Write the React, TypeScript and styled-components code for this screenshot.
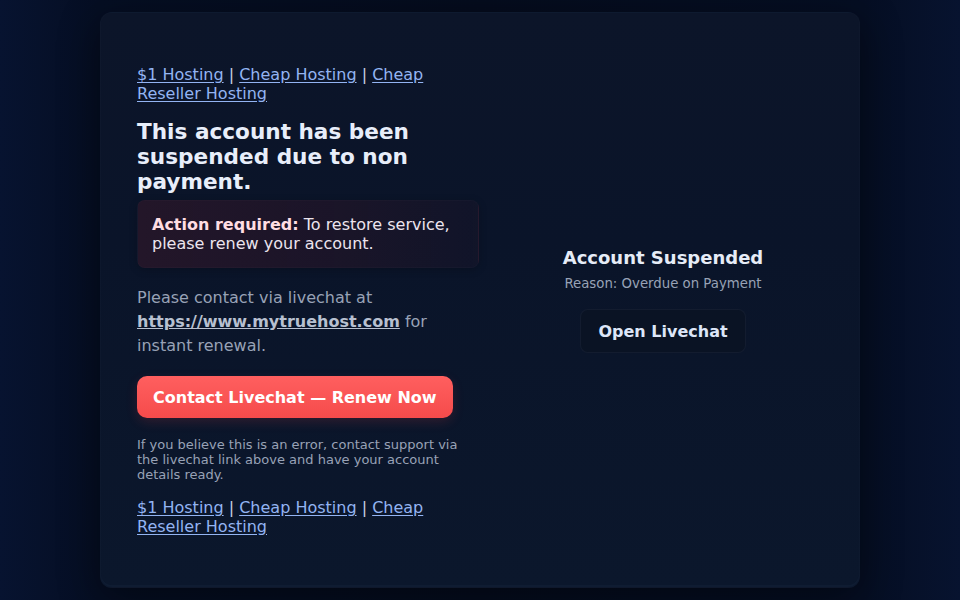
import React from "react";
import styled, { createGlobalStyle } from "styled-components";

const Global = createGlobalStyle`
  html, body { margin: 0; padding: 0; }
  body {
    min-height: 600px;
    font-family: "DejaVu Sans", "Noto Sans", sans-serif;
    background: linear-gradient(90deg, #071330 0%, #050e23 10%, #050c1e 50%, #050e23 90%, #07132f 100%);
    color: #e6ecf7;
  }
`;

const Page = styled.div`
  min-height: 600px;
  padding: 12px 100px;
  box-sizing: border-box;
`;

const Card = styled.main`
  height: 576px;
  box-sizing: border-box;
  border-radius: 12px;
  background: linear-gradient(180deg, #0c1529 0%, #0a1429 40%, #0b172c 100%);
  border: 1px solid rgba(255, 255, 255, 0.015);
  box-shadow: 0 10px 40px rgba(0, 0, 0, 0.45), inset 0 -2px 0 rgba(120, 150, 200, 0.04);
  padding: 36px 36px;
  display: grid;
  grid-template-columns: 1fr 320px;
  column-gap: 24px;
  align-items: center;
`;

const Left = styled.section`
  display: flex;
  flex-direction: column;
  padding-top: 16px;
  align-self: start;
`;

const LinkRow = styled.div`
  font-size: 16px;
  line-height: 19px;
  color: #c8d2e4;
`;

const SeoLink = styled.a`
  color: #93b4f2;
  text-decoration: underline;
  text-underline-offset: 2px;
`;

const Heading = styled.h1`
  margin: 16px 0 6px;
  font-size: 21.6px;
  line-height: 25px;
  font-weight: 700;
  color: #e8eefa;
`;

const Alert = styled.div`
  border-radius: 8px;
  padding: 14px 14px;
  border: 1px solid rgba(255, 255, 255, 0.02);
  background: linear-gradient(90deg, rgba(60, 24, 42, 0.5) 0%, rgba(46, 22, 40, 0.45) 60%, rgba(28, 22, 42, 0.4) 100%);
  box-shadow: 0 2px 8px rgba(0, 0, 0, 0.2);
  font-size: 16px;
  line-height: 19px;
  color: #ece4ee;
`;

const AlertLead = styled.strong`
  color: #ffdde3;
`;

const Body = styled.p`
  margin: 18px 0 0;
  font-size: 16px;
  line-height: 24px;
  color: #98a2b6;
`;

const SiteLink = styled.a`
  color: #b7c0d0;
  font-weight: 700;
  text-decoration: underline;
`;

const CtaButton = styled.button`
  margin-top: 18px;
  align-self: flex-start;
  height: 42px;
  padding: 0 16px;
  border: none;
  border-radius: 10px;
  background: linear-gradient(180deg, #ff5f5f 0%, #f54b4b 100%);
  box-shadow: 0 4px 12px rgba(255, 70, 70, 0.15);
  color: #ffffff;
  font-family: inherit;
  font-size: 16px;
  font-weight: 700;
  cursor: pointer;
`;

const Fine = styled.p`
  margin: 19px 0 16px;
  font-size: 13px;
  line-height: 15px;
  color: #98a2b6;
  max-width: 330px;
`;

const Right = styled.aside`
  display: flex;
  flex-direction: column;
  align-items: center;
  text-align: center;
`;

const SideTitle = styled.h2`
  margin: 0;
  font-size: 18px;
  line-height: 22px;
  font-weight: 700;
  color: #e6ecf7;
`;

const Reason = styled.div`
  margin-top: 7px;
  font-size: 13.3px;
  line-height: 16px;
  color: #98a2b6;
`;

const GhostButton = styled.button`
  margin-top: 17px;
  height: 44px;
  padding: 0 17px;
  border-radius: 8px;
  border: 1px solid rgba(140, 160, 200, 0.07);
  background: #0a1324;
  color: #dde6f8;
  font-family: inherit;
  font-size: 16px;
  font-weight: 700;
  cursor: pointer;
`;

const Links = () => (
  <LinkRow>
    <SeoLink href="#">$1 Hosting</SeoLink> | <SeoLink href="#">Cheap Hosting</SeoLink> |{" "}
    <SeoLink href="#">Cheap Reseller Hosting</SeoLink>
  </LinkRow>
);

export default function App() {
  return (
    <>
      <Global />
      <Page>
        <Card>
          <Left>
            <Links />
            <Heading>This account has been suspended due to non payment.</Heading>
            <Alert>
              <AlertLead>Action required:</AlertLead> To restore service, please renew your account.
            </Alert>
            <Body>
              Please contact via livechat at <SiteLink href="#">https://www.mytruehost.com</SiteLink> for
              instant renewal.
            </Body>
            <CtaButton>Contact Livechat — Renew Now</CtaButton>
            <Fine>
              If you believe this is an error, contact support via the livechat link above and have your
              account details ready.
            </Fine>
            <Links />
          </Left>
          <Right>
            <SideTitle>Account Suspended</SideTitle>
            <Reason>Reason: Overdue on Payment</Reason>
            <GhostButton>Open Livechat</GhostButton>
          </Right>
        </Card>
      </Page>
    </>
  );
}
